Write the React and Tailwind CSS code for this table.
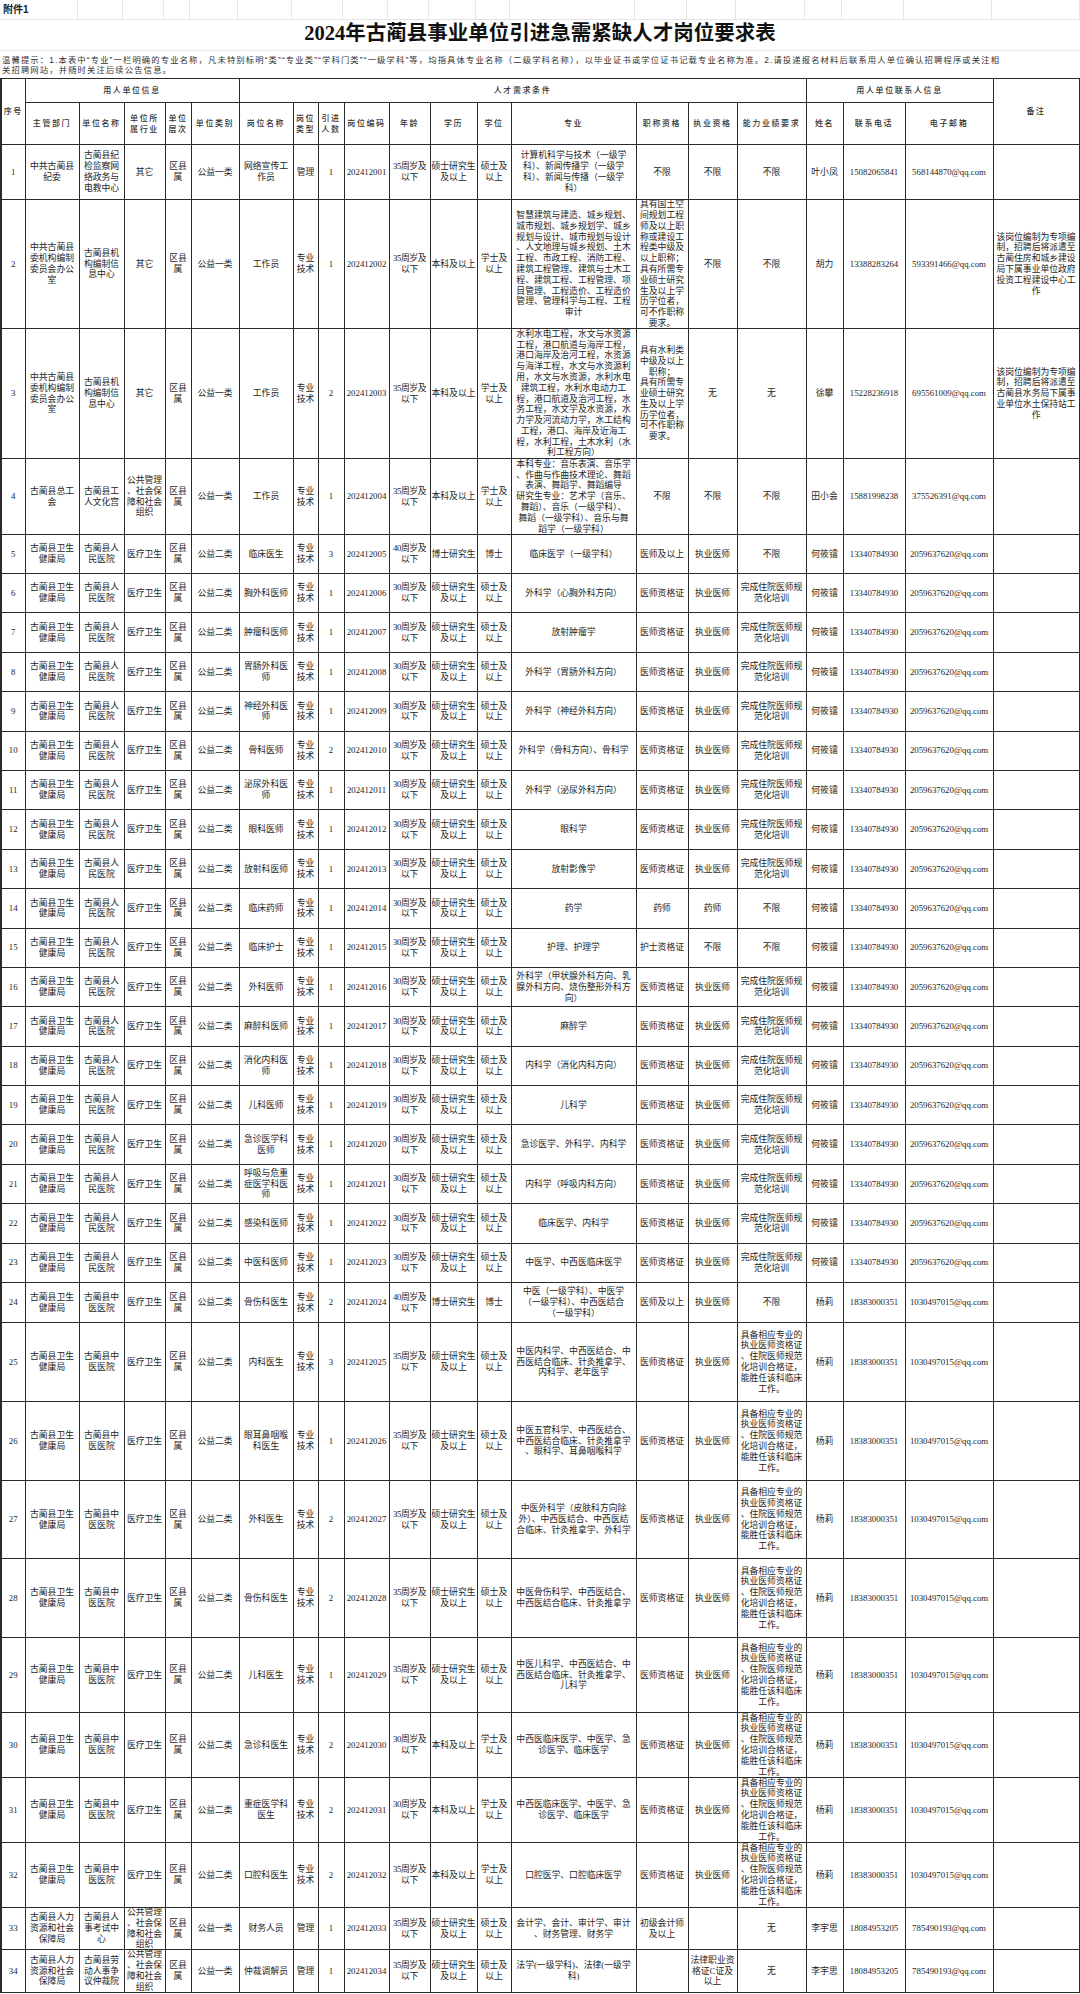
const colW = ['w-[24px]', 'w-[54px]', 'w-[45px]', 'w-[41px]', 'w-[26px]', 'w-[48px]', 'w-[54px]', 'w-[25px]', 'w-[26px]', 'w-[45px]', 'w-[41px]', 'w-[47px]', 'w-[34px]', 'w-[125px]', 'w-[52px]', 'w-[49px]', 'w-[69px]', 'w-[37px]', 'w-[62px]', 'w-[88px]', 'w-[86px]']

const topGrid = ['w-[78px]', 'w-[45px]', 'w-[41px]', 'w-[26px]', 'w-[48px]', 'w-[54px]', 'w-[51px]', 'w-[45px]', 'w-[41px]', 'w-[47px]', 'w-[34px]', 'w-[125px]', 'w-[52px]', 'w-[49px]', 'w-[69px]', 'w-[37px]', 'w-[62px]', 'w-[88px]', 'w-[88px]']

// h = height of the box inside each cell (row height less the 1px rule)
const hosp = {
  dept: '古蔺县卫生\n健康局', unit: '古蔺县人\n民医院', ind: '医疗卫生', lvl: '区县\n属', cat: '公益二类', type: '专业\n技术',
  num: '1', age: '30周岁及\n以下', edu: '硕士研究生\n及以上', deg: '硕士及\n以上', title: '医师资格证', prac: '执业医师',
  abil: '完成住院医师规\n范化培训', name: '何筱镭', phone: '13340784930', email: '2059637620@qq.com', note: '', h: 'h-[38.4px]',
}

const tcm = {
  ...hosp, unit: '古蔺县中\n医医院', age: '35周岁及\n以下',
  abil: '具备相应专业的\n执业医师资格证\n、住院医师规范\n化培训合格证，\n能胜任该科临床\n工作。',
  name: '杨莉', phone: '18383000351', email: '1030497015@qq.com', h: 'h-[78px]',
}

const hr = {
  dept: '古蔺县人力\n资源和社会\n保障局', ind: '公共管理\n、社会保\n障和社会\n组织', lvl: '区县\n属', cat: '公益一类', post: '', type: '管理',
  num: '1', age: '35周岁及\n以下', edu: '硕士研究生\n及以上', deg: '硕士及\n以上', abil: '无', name: '李宇思', phone: '18084953205', email: '785490193@qq.com', note: '',
}

const rows = [
  {
    no: '1', dept: '中共古蔺县\n纪委', unit: '古蔺县纪\n检监察网\n络政务与\n电教中心', ind: '其它', lvl: '区县\n属', cat: '公益一类', post: '网络宣传工\n作员', type: '管理',
    num: '1', code: '202412001', age: '35周岁及\n以下', edu: '硕士研究生\n及以上', deg: '硕士及\n以上',
    major: '计算机科学与技术（一级学\n科）、新闻传播学（一级学\n科）、新闻与传播（一级学\n科）',
    title: '不限', prac: '不限', abil: '不限', name: '叶小凤', phone: '15082065841', email: '568144870@qq.com', note: '', h: 'h-[54px]',
  },
  {
    no: '2', dept: '中共古蔺县\n委机构编制\n委员会办公\n室', unit: '古蔺县机\n构编制信\n息中心', ind: '其它', lvl: '区县\n属', cat: '公益一类', post: '工作员', type: '专业\n技术',
    num: '1', code: '202412002', age: '35周岁及\n以下', edu: '本科及以上', deg: '学士及\n以上',
    major: '智慧建筑与建造、城乡规划、\n城市规划、城乡规划学、城乡\n规划与设计、城市规划与设计\n、人文地理与城乡规划、土木\n工程、市政工程、消防工程、\n建筑工程管理、建筑与土木工\n程、建筑工程、工程管理、项\n目管理、工程造价、工程造价\n管理、管理科学与工程、工程\n审计',
    title: '具有国土空\n间规划工程\n师及以上职\n称或建设工\n程类中级及\n以上职称；\n具有所需专\n业硕士研究\n生及以上学\n历学位者，\n可不作职称\n要求。',
    prac: '不限', abil: '不限', name: '胡力', phone: '13388283264', email: '593391466@qq.com',
    note: '该岗位编制为专项编\n制，招聘后将派遣至\n古蔺住房和城乡建设\n局下属事业单位政府\n投资工程建设中心工\n作', h: 'h-[128px]',
  },
  {
    no: '3', dept: '中共古蔺县\n委机构编制\n委员会办公\n室', unit: '古蔺县机\n构编制信\n息中心', ind: '其它', lvl: '区县\n属', cat: '公益一类', post: '工作员', type: '专业\n技术',
    num: '2', code: '202412003', age: '35周岁及\n以下', edu: '本科及以上', deg: '学士及\n以上',
    major: '水利水电工程，水文与水资源\n工程，港口航道与海岸工程，\n港口海岸及治河工程，水资源\n与海洋工程，水文与水资源利\n用，水文与水资源，水利水电\n建筑工程，水利水电动力工\n程，港口航道及治河工程，水\n务工程，水文学及水资源，水\n力学及河流动力学，水工结构\n工程，港口、海岸及近海工\n程，水利工程，土木水利（水\n利工程方向）',
    title: '具有水利类\n中级及以上\n职称；\n具有所需专\n业硕士研究\n生及以上学\n历学位者，\n可不作职称\n要求。',
    prac: '无', abil: '无', name: '徐攀', phone: '15228236918', email: '695561009@qq.com',
    note: '该岗位编制为专项编\n制，招聘后将派遣至\n古蔺县水务局下属事\n业单位水土保持站工\n作', h: 'h-[129px]',
  },
  {
    no: '4', dept: '古蔺县总工\n会', unit: '古蔺县工\n人文化宫', ind: '公共管理\n、社会保\n障和社会\n组织', lvl: '区县\n属', cat: '公益一类', post: '工作员', type: '专业\n技术',
    num: '1', code: '202412004', age: '35周岁及\n以下', edu: '本科及以上', deg: '学士及\n以上',
    major: '本科专业：音乐表演、音乐学\n、作曲与作曲技术理论、舞蹈\n表演、舞蹈学、舞蹈编导\n研究生专业：艺术学（音乐、\n舞蹈）、音乐（一级学科）、\n舞蹈（一级学科）、音乐与舞\n蹈学（一级学科）',
    title: '不限', prac: '不限', abil: '不限', name: '田小会', phone: '15881998238', email: '375526391@qq.com', note: '', h: 'h-[75px]',
  },
  { ...hosp, no: '5', post: '临床医生', num: '3', code: '202412005', age: '40周岁及\n以下', edu: '博士研究生', deg: '博士', major: '临床医学（一级学科）', title: '医师及以上', abil: '不限', h: 'h-[38px]' },
  { ...hosp, no: '6', post: '胸外科医师', code: '202412006', major: '外科学（心胸外科方向）' },
  { ...hosp, no: '7', post: '肿瘤科医师', code: '202412007', major: '放射肿瘤学' },
  { ...hosp, no: '8', post: '胃肠外科医\n师', code: '202412008', major: '外科学（胃肠外科方向）' },
  { ...hosp, no: '9', post: '神经外科医\n师', code: '202412009', major: '外科学（神经外科方向）' },
  { ...hosp, no: '10', post: '骨科医师', num: '2', code: '202412010', major: '外科学（骨科方向）、骨科学' },
  { ...hosp, no: '11', post: '泌尿外科医\n师', code: '202412011', major: '外科学（泌尿外科方向）' },
  { ...hosp, no: '12', post: '眼科医师', code: '202412012', major: '眼科学' },
  { ...hosp, no: '13', post: '放射科医师', code: '202412013', major: '放射影像学' },
  { ...hosp, no: '14', post: '临床药师', code: '202412014', major: '药学', title: '药师', prac: '药师', abil: '不限' },
  { ...hosp, no: '15', post: '临床护士', code: '202412015', major: '护理、护理学', title: '护士资格证', prac: '不限', abil: '不限' },
  { ...hosp, no: '16', post: '外科医师', code: '202412016', major: '外科学（甲状腺外科方向、乳\n腺外科方向、烧伤整形外科方\n向）' },
  { ...hosp, no: '17', post: '麻醉科医师', code: '202412017', major: '麻醉学' },
  { ...hosp, no: '18', post: '消化内科医\n师', code: '202412018', major: '内科学（消化内科方向）' },
  { ...hosp, no: '19', post: '儿科医师', code: '202412019', major: '儿科学' },
  { ...hosp, no: '20', post: '急诊医学科\n医师', code: '202412020', major: '急诊医学、外科学、内科学' },
  { ...hosp, no: '21', post: '呼吸与危重\n症医学科医\n师', code: '202412021', major: '内科学（呼吸内科方向）' },
  { ...hosp, no: '22', post: '感染科医师', code: '202412022', major: '临床医学、内科学' },
  { ...hosp, no: '23', post: '中医科医师', code: '202412023', major: '中医学、中西医临床医学' },
  { ...tcm, no: '24', post: '骨伤科医生', num: '2', code: '202412024', age: '40周岁及\n以下', edu: '博士研究生', deg: '博士', major: '中医（一级学科）、中医学\n（一级学科）、中西医结合\n（一级学科）', title: '医师及以上', abil: '不限', h: 'h-[39px]' },
  { ...tcm, no: '25', post: '内科医生', num: '3', code: '202412025', major: '中医内科学、中西医结合、中\n西医结合临床、针灸推拿学、\n内科学、老年医学' },
  { ...tcm, no: '26', post: '眼耳鼻咽喉\n科医生', code: '202412026', major: '中医五官科学、中西医结合、\n中西医结合临床、针灸推拿学\n、眼科学、耳鼻咽喉科学' },
  { ...tcm, no: '27', post: '外科医生', num: '2', code: '202412027', major: '中医外科学（皮肤科方向除\n外）、中西医结合、中西医结\n合临床、针灸推拿学、外科学', h: 'h-[77px]' },
  { ...tcm, no: '28', post: '骨伤科医生', num: '2', code: '202412028', major: '中医骨伤科学、中西医结合、\n中西医结合临床、针灸推拿学' },
  { ...tcm, no: '29', post: '儿科医生', code: '202412029', major: '中医儿科学、中西医结合、中\n西医结合临床、针灸推拿学、\n儿科学', h: 'h-[74px]' },
  { ...tcm, no: '30', post: '急诊科医生', num: '2', code: '202412030', age: '30周岁及\n以下', edu: '本科及以上', deg: '学士及\n以上', major: '中西医临床医学、中医学、急\n诊医学、临床医学', h: 'h-[64px]' },
  { ...tcm, no: '31', post: '重症医学科\n医生', num: '2', code: '202412031', age: '30周岁及\n以下', edu: '本科及以上', deg: '学士及\n以上', major: '中西医临床医学、中医学、急\n诊医学、临床医学', h: 'h-[64px]' },
  { ...tcm, no: '32', post: '口腔科医生', num: '2', code: '202412032', edu: '本科及以上', deg: '学士及\n以上', major: '口腔医学、口腔临床医学', h: 'h-[64px]' },
  { ...hr, no: '33', unit: '古蔺县人\n事考试中\n心', post: '财务人员', code: '202412033', major: '会计学、会计、审计学、审计\n、财务管理、财务学', title: '初级会计师\n及以上', prac: '', h: 'h-[41px]' },
  { ...hr, no: '34', unit: '古蔺县劳\n动人事争\n议仲裁院', post: '仲裁调解员', code: '202412034', major: '法学(一级学科)、法律(一级学\n科)', title: '', prac: '法律职业资\n格证C证及\n以上', h: 'h-[42px]' },
]

const bodyFont = "font-['Liberation_Serif','Noto_Sans_CJK_SC',serif]"
const headFont = "font-['Liberation_Sans','Noto_Sans_CJK_SC',sans-serif]"
const td = 'border border-[#2b2b2b] p-0 text-center align-middle whitespace-pre text-[8.8px] text-[#1e1e1e]'
const th = 'border border-[#2b2b2b] p-0 text-center align-middle whitespace-pre text-[8px] tracking-[1.6px] font-medium text-[#333]'

function Box({ text, h, line, extra = '' }) {
  return (
    <div className={`${h} ${extra} flex flex-col justify-center items-center overflow-hidden`}>
      {String(text).split('\n').map((l, i) => (
        <div key={i} className={`${line} shrink-0`}>{l}</div>
      ))}
    </div>
  )
}

function Row({ r }) {
  const cells = [r.no, r.dept, r.unit, r.ind, r.lvl, r.cat, r.post, r.type, r.num, r.code, r.age, r.edu, r.deg, r.major, r.title, r.prac, r.abil, r.name, r.phone, r.email, r.note]
  return (
    <tr>
      {cells.map((c, i) => (
        <td key={i} className={td}>
          <Box text={c} h={r.h} line="h-[10.8px] leading-[10.8px]" extra={i === 10 ? 'tracking-[-0.4px]' : ''} />
        </td>
      ))}
    </tr>
  )
}

export default function App() {
  const sub = ['主管部门', '单位名称', '单位所\n属行业', '单位\n层次', '单位类别', '岗位名称', '岗位\n类型', '引进\n人数', '岗位编码', '年龄', '学历', '学位', '专业', '职称资格', '执业资格', '能力业绩要求', '姓名', '联系电话', '电子邮箱']
  return (
    <div className={`w-[1080px] h-[1994px] bg-white overflow-hidden ${bodyFont}`}>
      <div className="flex h-[20px] border-b border-[#e4e4e4]">
        {topGrid.map((w, i) => (
          <div key={i} className={`${w} shrink-0 border-r border-[#e8e8e8] flex items-center`}>
            {i === 0 && <span className={`${headFont} pl-[3px] text-[10px] font-bold text-[#222]`}>附件1</span>}
          </div>
        ))}
      </div>
      <div className="h-[31px] flex items-center justify-center pb-[4px] border-b border-[#ececec]">
        <h1 className="font-['Liberation_Serif','Noto_Sans_CJK_SC',serif] text-[20.5px] leading-[24px] font-bold text-[#111]">2024年古蔺县事业单位引进急需紧缺人才岗位要求表</h1>
      </div>
      <div className={`h-[27px] flex flex-col justify-center pl-[2px] ${headFont} text-[8.3px] tracking-[1.15px] text-[#333]`}>
        <p className="whitespace-nowrap h-[10px] leading-[10px]">温馨提示：1.本表中“专业”一栏明确的专业名称，凡未特别标明“类”“专业类”“学科门类”“一级学科”等，均指具体专业名称（二级学科名称），以毕业证书或学位证书记载专业名称为准。2.请投递报名材料后联系用人单位确认招聘程序或关注相</p>
        <p className="whitespace-nowrap h-[10px] leading-[10px]">关招聘网站，并随时关注后续公告信息。</p>
      </div>
      <table className="table-fixed border-collapse w-[1078px] border-l-2 border-[#2b2b2b]">
        <colgroup>
          {colW.map((w, i) => <col key={i} className={w} />)}
        </colgroup>
        <thead className={headFont}>
          <tr>
            <th rowSpan={2} className={th}><Box text="序号" h="h-[65px]" line="h-[11px] leading-[11px]" /></th>
            <th colSpan={5} className={th}><Box text="用人单位信息" h="h-[23px]" line="h-[11px] leading-[11px]" /></th>
            <th colSpan={11} className={th}><Box text="人才需求条件" h="h-[23px]" line="h-[11px] leading-[11px]" /></th>
            <th colSpan={3} className={th}><Box text="用人单位联系人信息" h="h-[23px]" line="h-[11px] leading-[11px]" /></th>
            <th rowSpan={2} className={th}><Box text="备注" h="h-[65px]" line="h-[11px] leading-[11px]" /></th>
          </tr>
          <tr>
            {sub.map((s, i) => (
              <th key={i} className={th}>
                <Box text={s} h="h-[41px]" line="h-[11px] leading-[11px]" />
              </th>
            ))}
          </tr>
        </thead>
        <tbody>
          {rows.map((r) => <Row key={r.no} r={r} />)}
        </tbody>
      </table>
    </div>
  )
}
